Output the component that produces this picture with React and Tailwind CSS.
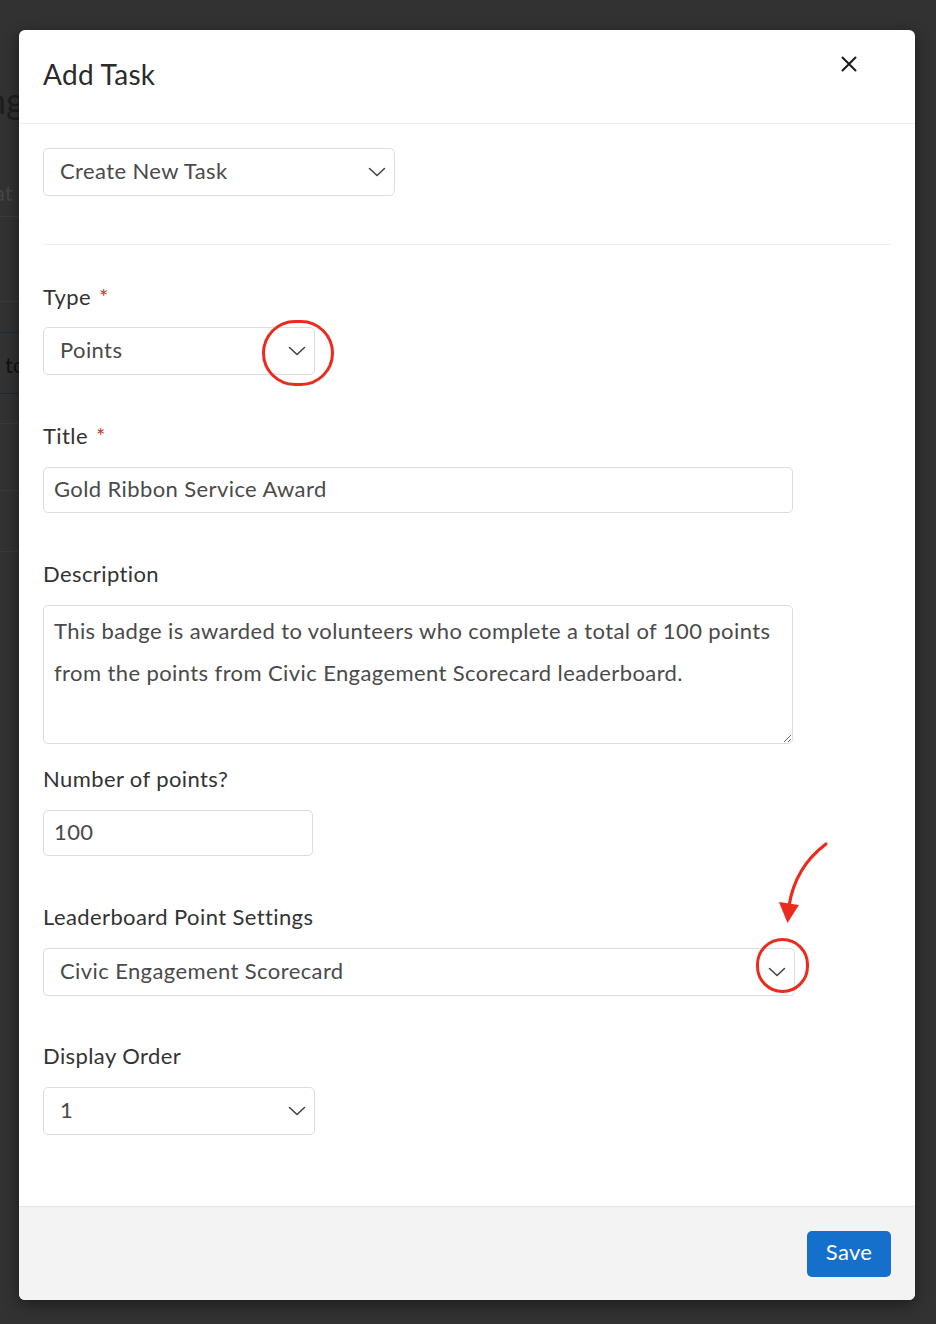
import { useState } from 'react'

const FONT = { fontFamily: 'Lato, "Noto Sans", sans-serif' }

function Chevron() {
  return (
    <svg width="18" height="10" viewBox="0 0 18 10" fill="none" className="mt-[3px] shrink-0">
      <path d="M1.5 1.5 L9 8.5 L16.5 1.5" stroke="#444" strokeWidth="1.6" strokeLinecap="round" strokeLinejoin="round" />
    </svg>
  )
}

function Select({ value, className = '', children }) {
  return (
    <div
      className={`relative flex h-[48px] items-center justify-between rounded-[5px] border border-[#dcdcdc] bg-white pb-[4px] pl-[16px] pr-[8px] text-[22px] tracking-[0.4px] text-[#4a4a4a] ${className}`}
    >
      <span>{value}</span>
      <Chevron />
      {children}
    </div>
  )
}

function Field({ label, required, className = '', children }) {
  return (
    <div className={`flex flex-col gap-[16px] ${className}`}>
      <div className="h-[30px] text-[22px] leading-[30px] tracking-[0.4px] text-[#333]">
        {label}
        {required && <span className="ml-[8px] text-[#c23b32]">*</span>}
      </div>
      {children}
    </div>
  )
}

// red annotation rings drawn over the screenshot
function Ring({ className }) {
  return <div className={`pointer-events-none absolute rounded-full border-[3px] border-[#ec2a1e] ${className}`} />
}

const inputCls =
  'block h-[46px] rounded-[5px] border border-[#dcdcdc] px-[10px] pb-[4px] text-[22px] tracking-[0.4px] text-[#4a4a4a] outline-none'

export default function App() {
  const [desc, setDesc] = useState(
    'This badge is awarded to volunteers who complete a total of 100 points from the points from Civic Engagement Scorecard leaderboard.'
  )

  return (
    <div className="relative min-h-[1324px] overflow-hidden bg-[#323232] pl-[19px] pt-[30px]" style={FONT}>
      {/* page behind the overlay */}
      <div className="absolute left-[-14px] top-[80px] text-[36px] leading-[40px] text-[#1e1e1e]">ng</div>
      <div className="absolute left-[-6px] top-[180px] text-[22px] leading-[26px] text-[#454545]">at</div>
      <div className="absolute left-[5px] top-[352px] text-[22px] leading-[26px] text-[#111]">to</div>
      <div className="absolute left-0 top-[216px] h-px w-[30px] bg-[#3b3b3b]" />
      <div className="absolute left-0 top-[301px] h-px w-[30px] bg-[#3b3b3b]" />
      <div className="absolute left-0 top-[332px] h-px w-[30px] bg-[#1e2a37]" />
      <div className="absolute left-0 top-[393px] h-px w-[30px] bg-[#1e2a37]" />
      <div className="absolute left-0 top-[423px] h-px w-[30px] bg-[#3a3a3a]" />
      <div className="absolute left-0 top-[490px] h-px w-[30px] bg-[#3a3a3a]" />
      <div className="absolute left-0 top-[551px] h-px w-[30px] bg-[#3a3a3a]" />

      <div className="relative w-[896px] overflow-hidden rounded-[6px] bg-white shadow-[0_4px_16px_rgba(0,0,0,0.45)]">
        <div className="flex h-[94px] items-start justify-between border-b border-[#efefef] pl-[24px] pr-[58px]">
          <h1 className="self-center pb-[5px] text-[28px] font-normal tracking-[0.3px] text-[#2b2b2b]">Add Task</h1>
          <button className="mt-[26px] p-0">
            <svg width="16" height="16" viewBox="0 0 16 16">
              <path d="M1.5 1.5 L14.5 14.5 M14.5 1.5 L1.5 14.5" stroke="#1a1a1a" strokeWidth="2" strokeLinecap="round" />
            </svg>
          </button>
        </div>

        <div className="flex flex-col px-[24px] pb-[71px] pt-[24px]">
          <Select value="Create New Task" className="w-[352px]" />
          <div className="mb-[37px] mt-[48px] h-px w-full bg-[#efefef]" />

          <div className="flex flex-col gap-[46px]">
            <Field label="Type" required>
              <Select value="Points" className="-mt-px w-[272px]">
                <Ring className="left-[218px] top-[-8px] h-[66px] w-[72px]" />
              </Select>
            </Field>

            <Field label="Title" required>
              <input readOnly value="Gold Ribbon Service Award" className={`${inputCls} w-[750px]`} />
            </Field>

            <div className="flex flex-col gap-[20px]">
              <Field label="Description">
                <textarea
                  value={desc}
                  onChange={(e) => setDesc(e.target.value)}
                  className="block h-[139px] w-[750px] resize rounded-[5px] border border-[#dcdcdc] px-[10px] pb-[6px] pt-[4px] text-[22px] leading-[42px] tracking-[0.4px] text-[#4a4a4a] outline-none"
                />
              </Field>
              <Field label="Number of points?">
                <input readOnly value="100" className={`${inputCls} w-[270px]`} />
              </Field>
            </div>

            <Field label="Leaderboard Point Settings">
              <Select value="Civic Engagement Scorecard" className="w-[752px]">
                <Ring className="left-[712px] top-[-11px] h-[55px] w-[53px]" />
                <svg className="pointer-events-none absolute left-[726px] top-[-113px]" width="70" height="95" viewBox="0 0 70 95" fill="none">
                  <path d="M56 8 C 40 20, 24 38, 19 70" stroke="#ec2a1e" strokeWidth="3.2" strokeLinecap="round" />
                  <path d="M9 66 L29 69 L17.5 87 Z" fill="#ec2a1e" />
                </svg>
              </Select>
            </Field>

            <Field label="Display Order" className="-mt-px">
              <Select value="1" className="w-[272px]" />
            </Field>
          </div>
        </div>

        <div className="flex h-[94px] items-center justify-end border-t border-[#e6e6e6] bg-[#f3f3f3] px-[24px]">
          <button className="h-[46px] w-[84px] rounded-[5px] bg-[#1470cb] pb-[4px] text-[22px] tracking-[0.3px] text-white">Save</button>
        </div>
      </div>
    </div>
  )
}
